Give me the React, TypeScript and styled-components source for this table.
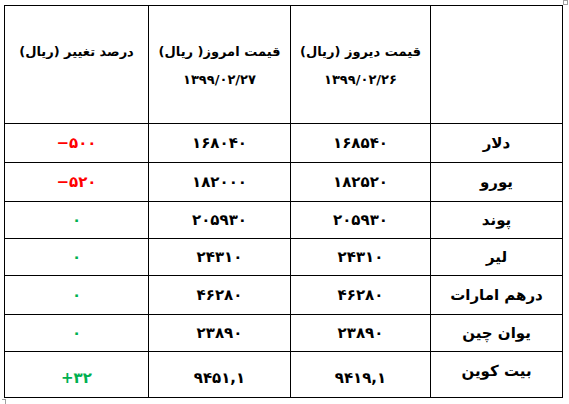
import styled, { createGlobalStyle } from "styled-components";

const GlobalStyle = createGlobalStyle`
  html, body {
    margin: 0;
    padding: 0;
    background: #ffffff;
  }
  body {
    font-family: "DejaVu Sans", "Noto Sans", sans-serif;
    color: #000000;
  }
`;

const Page = styled("div")`
  position: relative;
  width: 569px;
  height: 404px;
  padding: 5px 0 0 4px;
  box-sizing: border-box;
`;

const Table = styled("table")`
  direction: rtl;
  border-collapse: collapse;
  table-layout: fixed;
  width: 558px;
  font-size: 15px;
  font-weight: bold;
`;

const HeadCell = styled("td")`
  border: 1px solid #000;
  height: 118px;
  vertical-align: top;
  text-align: center;
  white-space: nowrap;
  font-size: 13px;
  padding: 32px 0 0;
  line-height: 28px;
  box-sizing: border-box;
`;

const Row = styled("tr")<{ $h: number }>`
  height: ${(p) => p.$h}px;
`;

const Cell = styled("td")<{ $tone?: "red" | "green"; $shift?: number }>`
  border: 1px solid #000;
  text-align: center;
  vertical-align: middle;
  white-space: nowrap;
  line-height: 20px;
  padding: ${(p) =>
    p.$shift ? (p.$shift > 0 ? `${p.$shift * 2}px 4px 0` : `0 4px ${-p.$shift * 2}px`) : "0 4px"};
  color: ${(p) => (p.$tone === "red" ? "#ff0000" : p.$tone === "green" ? "#00b050" : "#000")};
`;

const Num = styled("span")`
  direction: ltr;
  unicode-bidi: isolate;
  display: inline-block;
`;

const Line = styled("div")``;

const Handle = styled("div")`
  position: absolute;
  top: 0;
  right: 1px;
  width: 5px;
  height: 5px;
  border: 1px solid #a0a0a0;
  box-sizing: border-box;
`;

const CornerMark = styled("div")`
  position: absolute;
  left: 2px;
  bottom: 0;
  width: 4px;
  height: 5px;
  border-top: 1px solid #a0a0a0;
  border-right: 1px solid #a0a0a0;
  box-sizing: border-box;
`;

type Item = {
  name: string;
  yesterday: string;
  today: string;
  change: string;
  tone: "red" | "green";
  h: number;
};

const items: Item[] = [
  { name: "دلار", yesterday: "۱۶۸۵۴۰", today: "۱۶۸۰۴۰", change: "−۵۰۰", tone: "red", h: 39 },
  { name: "یورو", yesterday: "۱۸۲۵۲۰", today: "۱۸۲۰۰۰", change: "−۵۲۰", tone: "red", h: 39 },
  { name: "پوند", yesterday: "۲۰۵۹۳۰", today: "۲۰۵۹۳۰", change: "۰", tone: "green", h: 37 },
  { name: "لیر", yesterday: "۲۴۳۱۰", today: "۲۴۳۱۰", change: "۰", tone: "green", h: 37 },
  { name: "درهم امارات", yesterday: "۴۶۲۸۰", today: "۴۶۲۸۰", change: "۰", tone: "green", h: 39 },
  { name: "یوان چین", yesterday: "۲۳۸۹۰", today: "۲۳۸۹۰", change: "۰", tone: "green", h: 37 },
  { name: "بیت کوین", yesterday: "۹۴۱۹,۱", today: "۹۴۵۱,۱", change: "+۳۲", tone: "green", h: 46 },
];

export default function App() {
  return (
    <>
      <GlobalStyle />
      <Page>
        <Table>
          <colgroup>
            <col style={{ width: 132 }} />
            <col style={{ width: 140 }} />
            <col style={{ width: 142 }} />
            <col style={{ width: 144 }} />
          </colgroup>
          <tbody>
            <tr>
              <HeadCell />
              <HeadCell>
                <Line>قیمت دیروز (ریال)</Line>
                <Line>۱۳۹۹/۰۲/۲۶</Line>
              </HeadCell>
              <HeadCell>
                <Line>قیمت امروز( ریال)</Line>
                <Line>۱۳۹۹/۰۲/۲۷</Line>
              </HeadCell>
              <HeadCell>
                <Line>درصد تغییر (ریال)</Line>
              </HeadCell>
            </tr>
            {items.map((it, i) => {
              const last = i === items.length - 1;
              return (
                <Row key={it.name} $h={it.h}>
                  <Cell $shift={last ? -4 : 0}>{it.name}</Cell>
                  <Cell $shift={last ? 3 : 0}>
                    <Num>{it.yesterday}</Num>
                  </Cell>
                  <Cell $shift={last ? 3 : 0}>
                    <Num>{it.today}</Num>
                  </Cell>
                  <Cell $tone={it.tone} $shift={last ? 3 : 0}>
                    <Num>{it.change}</Num>
                  </Cell>
                </Row>
              );
            })}
          </tbody>
        </Table>
        <Handle />
        <CornerMark />
      </Page>
    </>
  );
}
